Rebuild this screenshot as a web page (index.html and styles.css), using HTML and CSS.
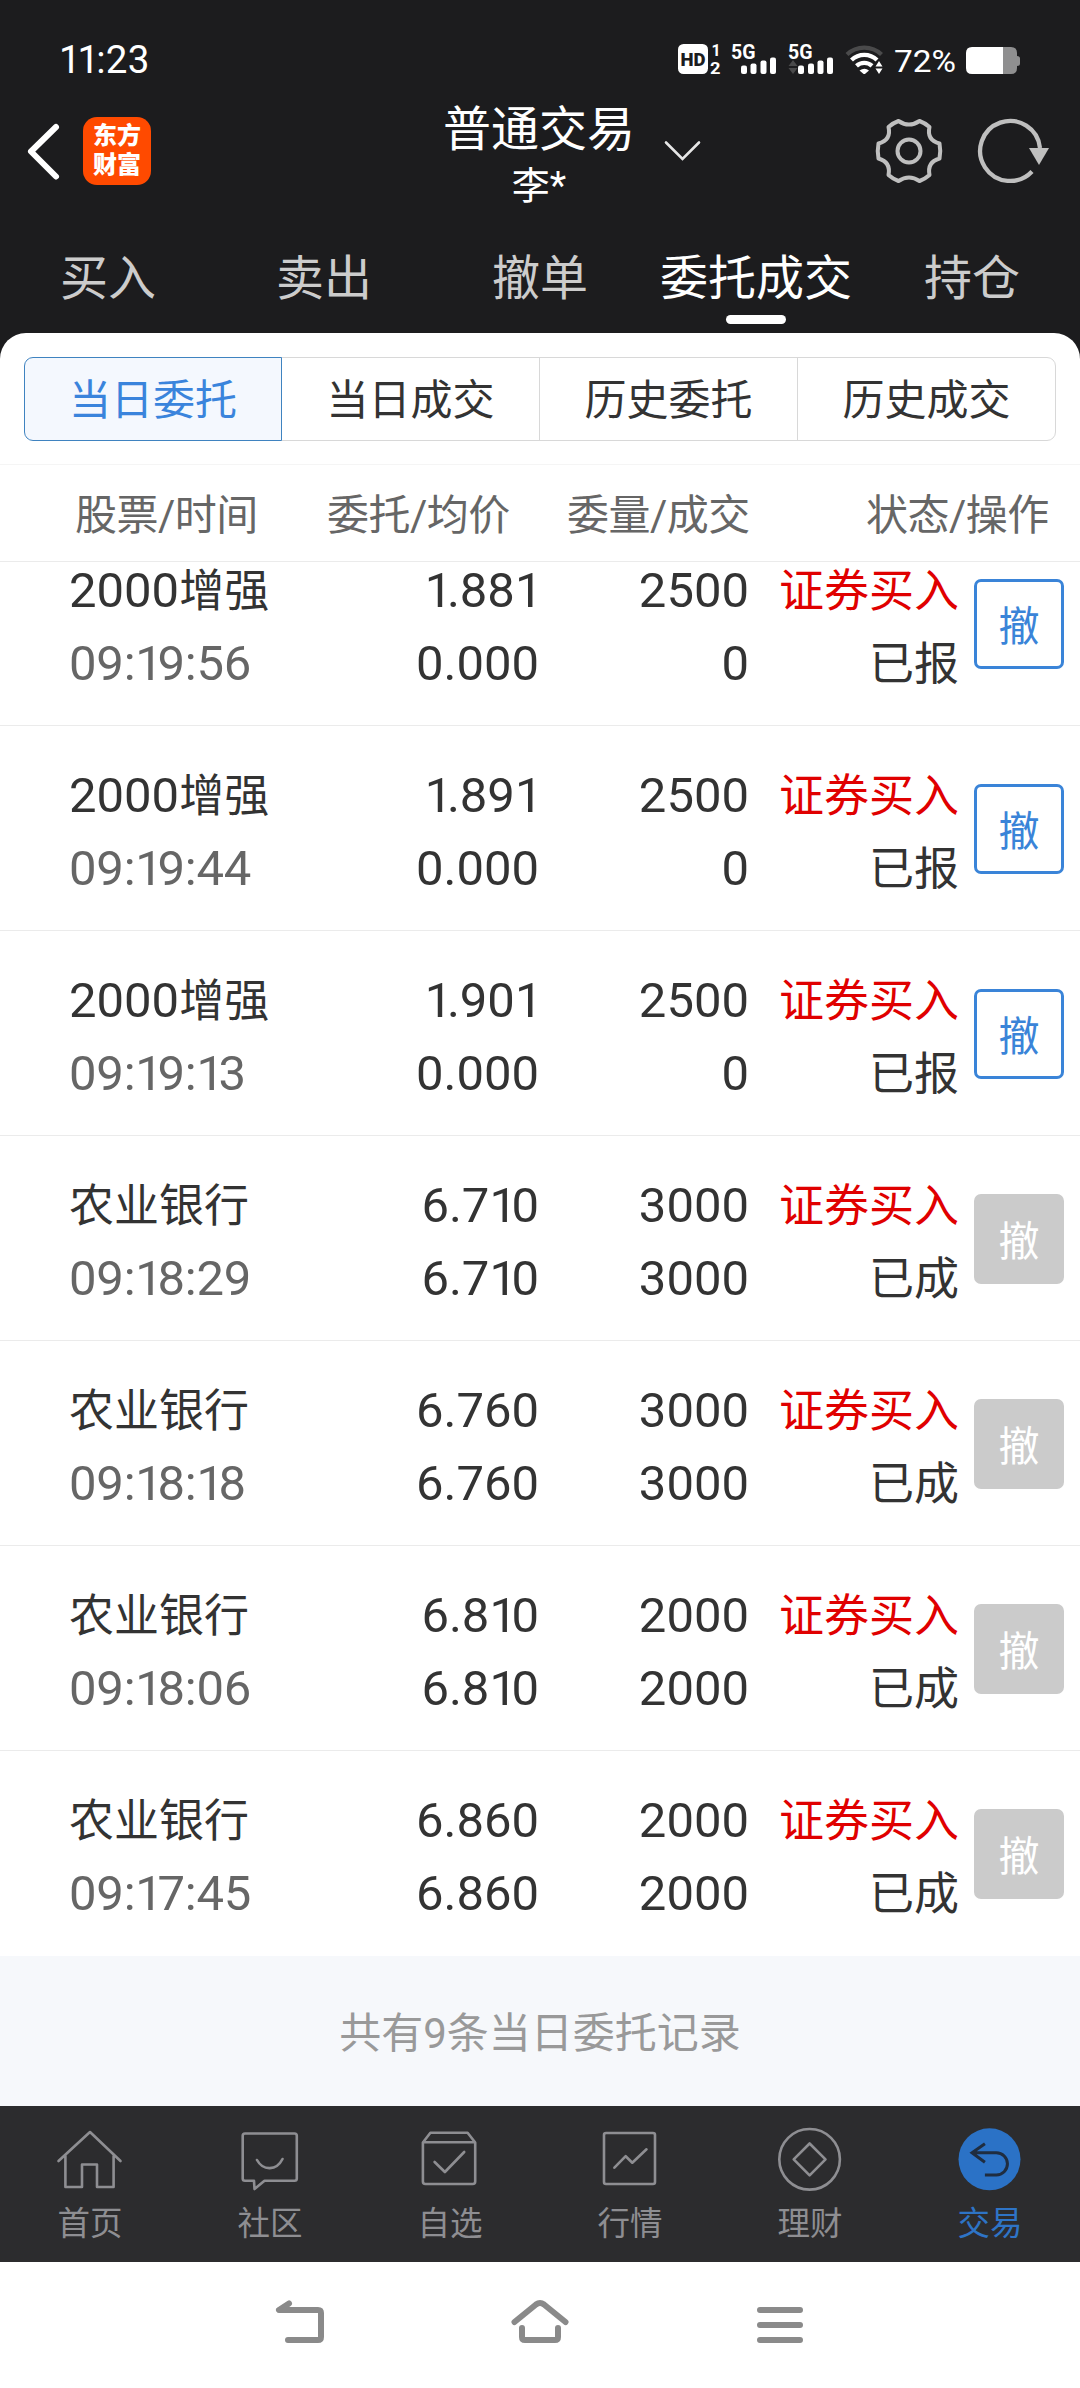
FILE: index.html
```html
<!DOCTYPE html>
<html lang="zh-CN">
<head>
<meta charset="utf-8">
<title>普通交易</title>
<link rel="stylesheet" href="styles.css">
</head>
<body>
<header class="header">
  <div class="status">
    <span class="clock"><u>1</u><u>1</u>:23</span>
    <svg class="status-icons" width="400" height="80" viewBox="0 0 400 80">
      <rect x="18" y="24" width="30" height="30" rx="5.5" fill="#fff"/>
      <text class="hd" x="20.5" y="46" textLength="25" lengthAdjust="spacingAndGlyphs">HD</text>
      <text class="sim" x="51.5" y="35.5">1</text>
      <text class="sim" x="50" y="53.5" textLength="10.5" lengthAdjust="spacingAndGlyphs">2</text>
      <text class="net" x="71" y="39" textLength="24.5" lengthAdjust="spacingAndGlyphs">5G</text>
      <g fill="#fff">
        <rect x="81" y="45.5" width="6" height="8.500" rx="2"/><rect x="90.500" y="43.500" width="6" height="10.500" rx="2"/><rect x="100.500" y="40.500" width="6" height="13.500" rx="2"/><rect x="110" y="37.500" width="6" height="16.500" rx="2"/>
        <rect x="138" y="45.500" width="6" height="8.500" rx="2"/><rect x="148" y="43.500" width="6" height="10.500" rx="2"/><rect x="157.500" y="40.500" width="6" height="13.500" rx="2"/><rect x="167" y="37.500" width="6" height="16.500" rx="2"/>
      </g>
      <text class="net" x="128" y="39" textLength="24.5" lengthAdjust="spacingAndGlyphs">5G</text>
      <path d="M128.500 46l4.500-6 4.500 6zM128.500 48l4.500 6 4.500-6z" fill="#4a4a4b"/>
      <g fill="none" stroke-width="4.300">
        <path d="M187 34.500a25 25 0 0 1 34.500 0" stroke="#4a4a4b"/>
        <path d="M191.500 40a18.500 18.500 0 0 1 25.500 0M196.500 45.800a11.500 11.500 0 0 1 15.500 0" stroke="#fff"/>
      </g>
      <path d="M199.500 50.500q5-3.500 9.500 0l-3.500 3q-1.200 1-2.500 0z" fill="#fff"/>
      <path d="M215.500 46.500l3.500-5.500 3.500 5.500zM215.500 48.500l3.500 5.500 3.500-5.500z" fill="#fff"/>
      <text class="pct" x="234" y="51.500" textLength="62" lengthAdjust="spacingAndGlyphs">72%</text>
      <path d="M343 27h8q6 0 6 6v3q3 0 3 2.500v5q0 2.500-3 2.500v2q0 6-6 6h-8z" fill="#8f8f90"/>
      <path d="M343 27h-31q-6 0-6 6v15q0 6 6 6h31z" fill="#fff"/>
    </svg>
  </div>
  <div class="titlebar">
    <div class="side">
      <svg width="36" height="60" viewBox="0 0 36 60"><path d="M31 6L6 30.500 31 55.500" fill="none" stroke="#fff" stroke-width="6" stroke-linecap="round" stroke-linejoin="round"/></svg>
      <div class="logo"><span>东方</span><span>财富</span></div>
    </div>
    <div class="title"><span class="title-main">普通交易</span><span class="title-sub">李*</span></div>
    <div class="side side-right">
      <svg width="40" height="24" viewBox="0 0 40 24"><path d="M3 3.500L19.500 20 36 3.500" fill="none" stroke="#e6e6e6" stroke-width="2.600" stroke-linecap="round"/></svg>
      <svg class="gear" width="70" height="70" viewBox="-35 -35 70 70" fill="none" stroke="#bfbfbf" stroke-width="4">
        <path stroke-linejoin="round" d="M-10.500-30Q0-23 10.500-30 Q16-28 20.500-24Q17.500-11 30.500-7.500Q32 0 30.500 7.500Q18 11 20.500 24Q16 28 10.500 30Q0 23-10.500 30Q-16 28-20.500 24Q-18 11-30.500 7.500Q-32 0-30.500-7.500Q-17.500-11-20.500-24Q-16-28-10.500-30Z"/>
        <circle r="11.500"/>
      </svg>
      <svg width="76" height="70" viewBox="-35 -35 76 70"><path d="M22 20.500A30 30 0 1 1 30-3" fill="none" stroke="#bfbfbf" stroke-width="4.300"/><path d="M19-3h20L29 14z" fill="#bfbfbf"/></svg>
    </div>
  </div>
  <nav class="tabs">
    <span>买入</span><span>卖出</span><span>撤单</span><span class="active">委托成交</span><span>持仓</span>
  </nav>
</header>
<main class="panel">
  <div class="segments"><span class="on">当日委托</span><span>当日成交</span><span>历史委托</span><span>历史成交</span></div>
  <div class="thead"><span>股票/时间</span><span>委托/均价</span><span>委量/成交</span><span>状态/操作</span></div>
  <div class="list">
    <div class="row"><div class="name"><b><span class="num">2000</span>增强</b><i>09:<u>1</u>9:56</i></div><div><b><u>1</u>.88<u class="end">1</u></b><b>0.000</b></div><div><b>2500</b><b>0</b></div><div class="state"><b class="buy">证券买入</b><b>已报</b></div><button class="cancel">撤</button></div>
    <div class="row"><div class="name"><b><span class="num">2000</span>增强</b><i>09:<u>1</u>9:44</i></div><div><b><u>1</u>.89<u class="end">1</u></b><b>0.000</b></div><div><b>2500</b><b>0</b></div><div class="state"><b class="buy">证券买入</b><b>已报</b></div><button class="cancel">撤</button></div>
    <div class="row"><div class="name"><b><span class="num">2000</span>增强</b><i>09:<u>1</u>9:<u>1</u>3</i></div><div><b><u>1</u>.90<u class="end">1</u></b><b>0.000</b></div><div><b>2500</b><b>0</b></div><div class="state"><b class="buy">证券买入</b><b>已报</b></div><button class="cancel">撤</button></div>
    <div class="row"><div class="name"><b>农业银行</b><i>09:<u>1</u>8:29</i></div><div><b>6.7<u>1</u>0</b><b>6.7<u>1</u>0</b></div><div><b>3000</b><b>3000</b></div><div class="state"><b class="buy">证券买入</b><b>已成</b></div><button class="cancel done">撤</button></div>
    <div class="row"><div class="name"><b>农业银行</b><i>09:<u>1</u>8:<u>1</u>8</i></div><div><b>6.760</b><b>6.760</b></div><div><b>3000</b><b>3000</b></div><div class="state"><b class="buy">证券买入</b><b>已成</b></div><button class="cancel done">撤</button></div>
    <div class="row"><div class="name"><b>农业银行</b><i>09:<u>1</u>8:06</i></div><div><b>6.8<u>1</u>0</b><b>6.8<u>1</u>0</b></div><div><b>2000</b><b>2000</b></div><div class="state"><b class="buy">证券买入</b><b>已成</b></div><button class="cancel done">撤</button></div>
    <div class="row"><div class="name"><b>农业银行</b><i>09:<u>1</u>7:45</i></div><div><b>6.860</b><b>6.860</b></div><div><b>2000</b><b>2000</b></div><div class="state"><b class="buy">证券买入</b><b>已成</b></div><button class="cancel done">撤</button></div>
  </div>
</main>
<div class="summary">共有9条当日委托记录</div>
<nav class="appnav">
  <a><svg viewBox="0 0 72 72"><path d="M4.500 37L36 8l30.500 29M11.400 32v31h16.600V40.500h15V63h16.600V32"/></svg>首页</a>
  <a><svg viewBox="0 0 72 72"><path d="M11 9.500h49.500q2.300 0 2.300 2.300V54.500q0 2.300-2.300 2.300H30.500L20.500 65l-.5-8.200h-9q-2.300 0-2.300-2.300V11.800Q8.700 9.500 11 9.500zM23 36c6 11 19.500 11 25.500-1"/></svg>社区</a>
  <a><svg viewBox="0 0 72 72"><path d="M8.900 18.500l7.500-9.800h37.200l7.600 9.800V57.500q0 2.500-2.500 2.500H11.400q-2.500 0-2.500-2.500zM9 18.300h52M20.600 38l10.300 10 19.300-20"/></svg>自选</a>
  <a><svg viewBox="0 0 72 72"><rect x="10" y="9" width="51" height="51" rx="2"/><path d="M20.400 43.700l11.300-11.500 6.600 6.500L52.500 25.300"/></svg>行情</a>
  <a><svg viewBox="0 0 72 72"><circle cx="35.600" cy="35.300" r="30.300"/><path d="M35.600 19.500l15.900 15.900-15.900 15.900-15.900-15.900z"/></svg>理财</a>
  <a class="current"><svg viewBox="0 0 72 72"><circle class="disc" cx="35.500" cy="35.300" r="31"/><path d="M30.900 19.700L18 28.700l12.900 9.600M18 28.700h24.300a11.100 11.100 0 0 1 0 22.300H30.900"/></svg>交易</a>
</nav>
<footer class="sysnav">
  <svg width="60" height="60" viewBox="270 2292 60 60"><path d="M289 2303.500l-10 6.500h39q3 0 3 3v24q0 3-3 3H288"/></svg>
  <svg width="70" height="60" viewBox="505 2292 70 60"><path d="M514.500 2322L536 2304.500q4-3 8 0L565.500 2322M522 2328v9q0 3 3 3h30q3 0 3-3v-9"/></svg>
  <svg width="60" height="60" viewBox="750 2292 60 60"><path d="M760 2310h40M760 2325h40M760 2340h40"/></svg>
</footer>
</body>
</html>
```

FILE: styles.css
```css
* { box-sizing: border-box; }
body {
  margin: 0;
  width: 1080px;
  height: 2388px;
  overflow: hidden;
  background: #1c1c1e;
  font-family: Roboto, "Noto Sans CJK SC", sans-serif;
  color: #333;
}
svg { display: block; }
/* narrow figure one */
u { text-decoration: none; letter-spacing: -.112em; }
u.end { letter-spacing: -.07em; }

.header { height: 333px; color: #fff; }
.status { height: 100px; display: flex; justify-content: space-between; padding: 20px 20px 0 59px; }
.clock { font-size: 38.500px; line-height: 79px; letter-spacing: .3px; }
.clock u { letter-spacing: -.08em; }
.hd { font: 900 19px Roboto, sans-serif; fill: #1c1c1e; }
.sim { font: 700 16px Roboto, sans-serif; fill: #fff; }
.net { font: 700 21px Roboto, sans-serif; fill: #fff; }
.pct { font: 400 32px Roboto, sans-serif; fill: #fff; }

.titlebar { height: 122px; display: grid; grid-template-columns: 1fr 200px 1fr; }
.side { display: flex; align-items: center; height: 102px; padding-left: 25px; }
.side-right { padding-left: 23px; }
.gear { margin: 0 31px 0 171px; }
.logo {
  width: 68px; height: 68px; margin-left: 22px; border-radius: 14px;
  background: #ff4a00; color: #fff; font-size: 24px; font-weight: 900;
  display: flex; flex-direction: column; align-items: center; justify-content: center;
}
.logo span { line-height: 29px; }
.title { display: flex; flex-direction: column; align-items: center; white-space: nowrap; padding-top: 1px; margin-left: -2px; }
.title-main { font-size: 48px; line-height: 57px; }
.title-sub { font-size: 38px; line-height: 57px; }

.tabs { height: 111px; display: grid; grid-template-columns: repeat(5, 216px); }
.tabs span {
  display: flex; flex-direction: column; align-items: center;
  font-size: 48px; line-height: 113px; color: #ccc; white-space: nowrap;
}
.tabs .active { color: #fff; }
.active::after { content: ""; width: 60px; height: 9px; border-radius: 5px; background: #fff; margin-top: -20px; }

.panel { height: 1623px; background: #fff; border-radius: 26px 26px 0 0; display: flow-root; }
.segments { display: grid; grid-template-columns: repeat(4, 1fr); height: 84px; margin: 24px 24px 23px; }
.segments span {
  border: 1px solid #d8d8d8; margin-left: -1px; padding-top: 3px;
  font-size: 42px; line-height: 80px; height: 84px; text-align: center;
}
.segments span:last-child { border-radius: 0 9px 9px 0; }
.segments .on {
  margin-left: 0; border-color: #3f83c0; border-radius: 9px 0 0 9px;
  background: #f4f8fe; color: #3a84dc; position: relative;
}
.thead {
  display: grid; grid-template-columns: 252px 240px 299px 1fr; height: 98px;
  border-top: 1px solid #f5f5f5; border-bottom: 1px solid #ebebeb;
  padding-left: 75px; font-size: 42px; line-height: 101px; letter-spacing: -.5px; color: #666;
}
.list { height: 1394px; }
.row {
  display: grid; grid-template-columns: 241px 229px 210px 210px 90px;
  height: 205px; padding: 33px 0 0 69px; border-bottom: 1px solid #ebebeb; text-align: right;
}
.row:last-child { border-bottom: 0; }
.row b, .row i { display: block; font: 400 49px/73px Roboto, "Noto Sans CJK SC", sans-serif; white-space: nowrap; }
.row .name { text-align: left; }
.row .name b, .row .state b { font-family: "Noto Sans CJK SC", sans-serif; font-size: 45px; margin: -3px 0 3px; }
.row .name .num { font: 400 49px/1 Roboto, sans-serif; }
.row .name i { color: #666; letter-spacing: -.2px; }
.row .name u { letter-spacing: -.112em; }
.row .buy { color: #e00000; }
.cancel {
  width: 90px; height: 90px; margin: 25px 0 0 15px; padding: 0 0 3px;
  border: 3px solid #3a84d8; border-radius: 7px; background: #fff;
  color: #3a84d8; font: 400 41px/80px "Noto Sans CJK SC", sans-serif;
}
.cancel.done { border-color: #cbcbcb; background: #cbcbcb; color: #fff; }
/* the list is scrolled: its first row has lost its upper padding */
.row:first-child { height: 164px; padding-top: 0; }
.row:first-child b:first-child { line-height: 57px; }
.row:first-child b:last-child { margin-top: 8px; }
.row:first-child .name i { margin-top: 11px; }
.row:first-child .state b:last-child { margin-top: 8px; }
.row:first-child .cancel { margin-top: 17px; }

.summary { height: 150px; background: #f6f8fb; color: #999; text-align: center; font-size: 42px; line-height: 155px; }

.appnav { height: 156px; background: #2c2c2e; display: grid; grid-template-columns: repeat(6, 180px); }
.appnav a {
  display: flex; flex-direction: column; align-items: center; padding-top: 18px;
  font-size: 32.500px; line-height: 56px; color: #8e8e92;
}
.appnav svg { width: 72px; height: 72px; fill: none; stroke: currentColor; stroke-width: 2.600; stroke-linejoin: round; stroke-linecap: round; }
.appnav .current { color: #2e74c6; }
.appnav .current path { stroke: #1f2d40; stroke-width: 3; stroke-linejoin: miter; stroke-linecap: butt; }
.disc { fill: #2b72c6; stroke: none; }

.sysnav { height: 126px; background: #fff; display: flex; justify-content: space-between; padding: 30px 270px 0; }
.sysnav svg { fill: none; stroke: #8a8a8a; stroke-width: 6; stroke-linecap: round; stroke-linejoin: round; }
```
